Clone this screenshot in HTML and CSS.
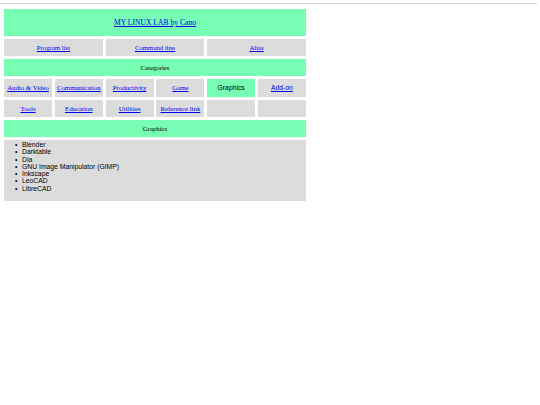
FILE: index.html
```html
<!DOCTYPE html>
<html>
<head>
<meta charset="utf-8">
<title>MY LINUX LAB by Cano</title>
<link rel="stylesheet" href="styles.css">
</head>
<body>
<div class="topline"></div>
<div class="page">
  <div class="cell green head span6"><a href="#">MY LINUX LAB by Cano</a></div>
  <div class="cell gray nav span2"><a href="#">Program list</a></div>
  <div class="cell gray nav span2"><a href="#">Command line</a></div>
  <div class="cell gray nav span2"><a href="#">Alias</a></div>
  <div class="cell green bar span6">Categories</div>
  <div class="cell gray cat"><a href="#">Audio &amp; Video</a></div>
  <div class="cell gray cat"><a href="#">Communication</a></div>
  <div class="cell gray cat"><a href="#">Productivity</a></div>
  <div class="cell gray cat"><a href="#">Game</a></div>
  <div class="cell green cat sans">Graphics</div>
  <div class="cell gray cat sans"><a href="#">Add-on</a></div>
  <div class="cell gray cat"><a href="#">Tools</a></div>
  <div class="cell gray cat"><a href="#">Education</a></div>
  <div class="cell gray cat"><a href="#">Utilities</a></div>
  <div class="cell gray cat"><a href="#">Reference link</a></div>
  <div class="cell gray cat"></div>
  <div class="cell gray cat"></div>
  <div class="cell green bar span6">Graphics</div>
  <div class="listbox span6">
    <ul class="list">
      <li>Blender</li>
      <li>Darktable</li>
      <li>Dia</li>
      <li>GNU Image Manipulator (GIMP)</li>
      <li>Inkscape</li>
      <li>LeoCAD</li>
      <li>LibreCAD</li>
    </ul>
  </div>
</div>
</body>
</html>
```
FILE: styles.css
```css
html, body {
  margin: 0;
  padding: 0;
  background: #ffffff;
}
body {
  font-family: "Liberation Serif", "Times New Roman", serif;
  font-size: 6.8px;
  color: #000000;
}
.topline {
  margin-top: 3px;
  width: 537px;
  height: 1px;
  background: #d3d3d3;
}
.page {
  margin: 5px 0 0 4px;
  width: 302px;
  display: grid;
  grid-template-columns: repeat(6, 1fr);
  grid-auto-rows: auto;
  row-gap: 3px;
  column-gap: 2.7px;
}
.span6 { grid-column: span 6; }
.span2 { grid-column: span 2; }
.cell {
  display: flex;
  align-items: center;
  justify-content: center;
  text-align: center;
  white-space: nowrap;
}
.green { background: #78fdb4; }
.gray { background: #dcdcdc; }
.head { height: 27px; font-size: 7.6px; }
.nav { height: 17px; }
.bar { height: 17px; }
.cat { height: 17.5px; }
.sans { font-family: "Liberation Sans", Arial, sans-serif; }
a { color: #0000ee; text-decoration: underline; }
.listbox {
  background: #dcdcdc;
  height: 61px;
  font-family: "Liberation Sans", Arial, sans-serif;
  font-size: 6.8px;
}
.list {
  margin: 1px 0 0 0;
  padding-left: 11px;
  line-height: 7.3px;
  list-style: none;
}
.list li::before {
  content: "\2022";
  display: inline-block;
  width: 7px;
}
```
